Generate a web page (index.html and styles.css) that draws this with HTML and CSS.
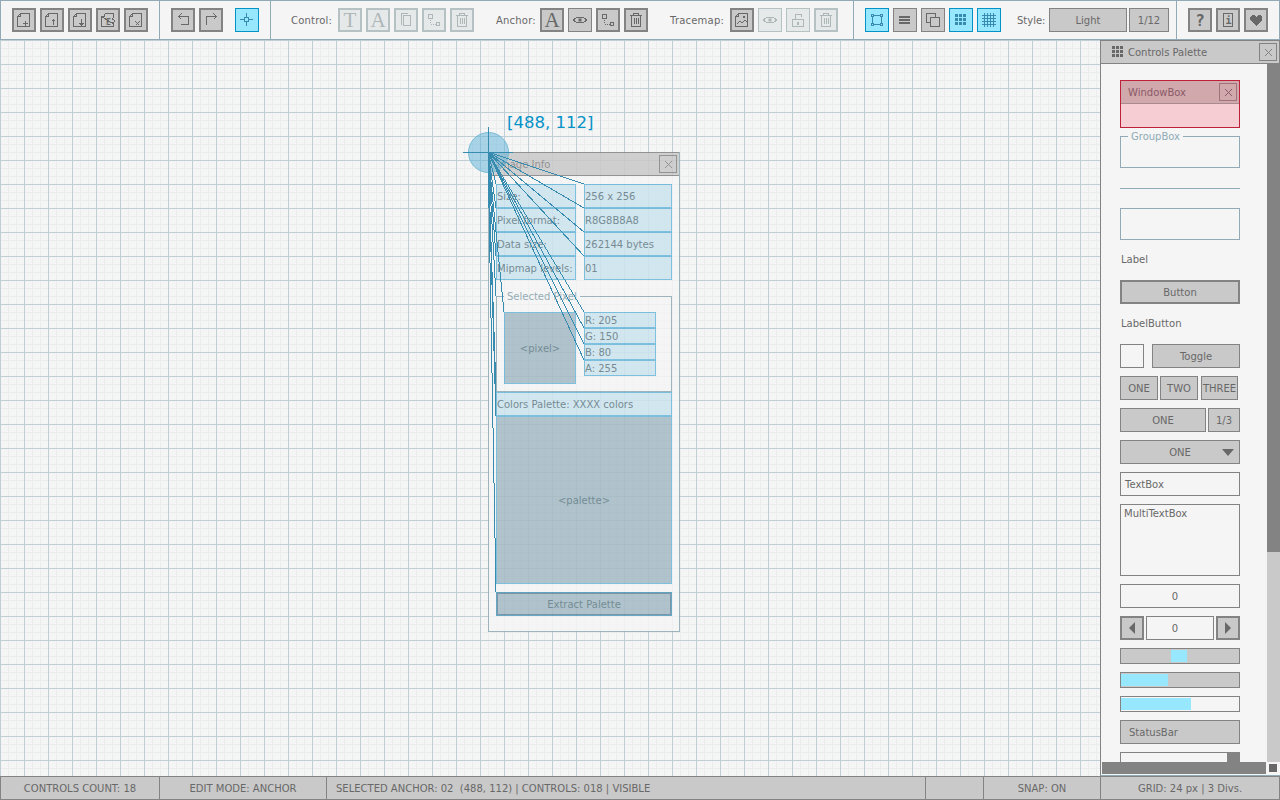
FILE: index.html
```html
<!DOCTYPE html>
<html>
    <head>
        <title>rGuiLayout</title>
        <link rel="stylesheet" href="styles.css">
    </head>
    <body>
        <svg class="icon-defs">
            <symbol id="i-file-new" viewBox="0 0 16 16"><path d="M4.5 1.5h9v13h-12v-10zM1.5 4.5h3v-3M7 11.5h5M9.5 9v5"/></symbol>
            <symbol id="i-file-open" viewBox="0 0 16 16"><path d="M4.5 1.5h9v13h-12v-10zM1.5 4.5h3v-3M9.5 13v-6M7.5 9.5l2-2 2 2"/></symbol>
            <symbol id="i-file-save" viewBox="0 0 16 16"><path d="M4.5 1.5h9v13h-12v-10zM1.5 4.5h3v-3M9.5 7v6M7.5 11l2 2 2-2"/></symbol>
            <symbol id="i-file-export" viewBox="0 0 16 16"><path d="M4.5 1.5h9v4M13.5 12v2.5h-12v-10zM1.5 4.5h3v-3M12 6.5l3 2.5-3 2.5"/><text class="icon-text" x="6" y="13" font-size="8">E</text></symbol>
            <symbol id="i-file-close" viewBox="0 0 16 16"><path d="M4.5 1.5h9v13h-12v-10zM1.5 4.5h3v-3M7.5 9.5l4 4M11.5 9.5l-4 4"/></symbol>
            <symbol id="i-undo" viewBox="0 0 16 16"><path d="M3.5 4.5h9.5v7.5h-7.5M6.5 1.5l-3 3 3 3"/></symbol>
            <symbol id="i-redo" viewBox="0 0 16 16"><path d="M3.5 13v-8.5h10M10.5 1.5l3 3-3 3"/></symbol>
            <symbol id="i-cross" viewBox="0 0 16 16"><path d="M5.5 5.5h4v4h-4zM1 7.5h4M10 7.5h4M7.5 1v4M7.5 10v4"/></symbol>
            <symbol id="i-copy" viewBox="0 0 16 16"><path d="M3.5 12.5v-11h6M5.5 3.5h7v10h-7z"/></symbol>
            <symbol id="i-link" viewBox="0 0 16 16"><path d="M2.5 2.5h4v4h-4zM10.5 10.5h3v3h-3zM4.5 8v1M4.5 10v1M4.5 12.5h1M6.5 12.5h1M8.5 12.5h1"/></symbol>
            <symbol id="i-trash" viewBox="0 0 16 16"><path d="M5.5 3v-1.5h5v1.5M2 3.5h12M3.5 4v10.5h9v-10.5M6.5 6v6M8.5 6v6M10.5 6v6"/></symbol>
            <symbol id="i-eye" viewBox="0 0 16 16"><path d="M1 8q7-6 14 0q-7 6-14 0z"/><rect class="solid" x="6.5" y="6.5" width="3" height="3"/></symbol>
            <symbol id="i-image" viewBox="0 0 16 16"><path d="M4.5 1.5h9v13h-12v-10zM1.5 4.5h3v-3M3 12l3-3 2 2 3-3 2 2"/><rect class="solid" x="9" y="4" width="2" height="2"/></symbol>
            <symbol id="i-unlock" viewBox="0 0 16 16"><path d="M2.5 7.5h11v7h-11zM5.5 7v-4.5h5.500v2M7.500 10.500h1v2h-1z"/></symbol>
            <symbol id="i-box" viewBox="0 0 16 16"><path d="M4 3.500h8M4 12.500h8M3.500 4v8M12.500 4v8M2.500 2.500h2v2h-2zM11.500 2.500h2v2h-2zM2.500 11.500h2v2h-2zM11.500 11.500h2v2h-2z"/></symbol>
            <symbol id="i-lines" viewBox="0 0 16 16"><rect class="solid" x="2" y="4" width="11" height="2"/><rect class="solid" x="2" y="7" width="11" height="2"/><rect class="solid" x="2" y="10" width="11" height="2"/></symbol>
            <symbol id="i-layers" viewBox="0 0 16 16"><path d="M5.500 10.500h-4v-9h9v4M5.500 5.500h9v9h-9z"/></symbol>
            <symbol id="i-dots" viewBox="0 0 16 16"><g class="solid"><rect x="2" y="2" width="3" height="3"/><rect x="6" y="2" width="3" height="3"/><rect x="10" y="2" width="3" height="3"/><rect x="2" y="6" width="3" height="3"/><rect x="6" y="6" width="3" height="3"/><rect x="10" y="6" width="3" height="3"/><rect x="2" y="10" width="3" height="3"/><rect x="6" y="10" width="3" height="3"/><rect x="10" y="10" width="3" height="3"/></g></symbol>
            <symbol id="i-grid" viewBox="0 0 16 16"><path d="M1 3.500h14M1 6.500h14M1 9.500h14M1 12.500h14M3.500 1v14M6.500 1v14M9.500 1v14M12.500 1v14"/></symbol>
            <symbol id="i-info" viewBox="0 0 16 16"><path d="M3.500 1.500h9v13h-9z"/><text class="icon-text" x="5.500" y="12" font-size="10">i</text></symbol>
            <symbol id="i-heart" viewBox="0 0 16 16"><path class="solid" d="M4 3h2l2 2 2-2h2l2 2v3l-6 6-6-6v-3z"/></symbol>
            <symbol id="i-close" viewBox="0 0 9 9"><path d="M1 1l7 7M8 1l-7 7"/></symbol>
        </svg>

        <div id="toolbar">
            <div class="tool-section file-tools">
                <div class="btn"><svg class="ic"><use href="#i-file-new"/></svg></div>
                <div class="btn"><svg class="ic"><use href="#i-file-open"/></svg></div>
                <div class="btn"><svg class="ic"><use href="#i-file-save"/></svg></div>
                <div class="btn"><svg class="ic"><use href="#i-file-export"/></svg></div>
                <div class="btn"><svg class="ic"><use href="#i-file-close"/></svg></div>
            </div>
            <div class="tool-section edit-tools">
                <div class="btn"><svg class="ic"><use href="#i-undo"/></svg></div>
                <div class="btn"><svg class="ic"><use href="#i-redo"/></svg></div>
                <div class="btn thin on cross-btn"><svg class="ic"><use href="#i-cross"/></svg></div>
            </div>
            <div class="tool-section item-tools">
                <div class="tool-group">
                    <span class="tool-label label-control">Control:</span>
                    <div class="btn off letter">T</div>
                    <div class="btn off letter">A</div>
                    <div class="btn off"><svg class="ic"><use href="#i-copy"/></svg></div>
                    <div class="btn off"><svg class="ic"><use href="#i-link"/></svg></div>
                    <div class="btn off"><svg class="ic"><use href="#i-trash"/></svg></div>
                </div>
                <div class="tool-group">
                    <span class="tool-label label-anchor">Anchor:</span>
                    <div class="btn letter">A</div>
                    <div class="btn thin"><svg class="ic"><use href="#i-eye"/></svg></div>
                    <div class="btn"><svg class="ic"><use href="#i-link"/></svg></div>
                    <div class="btn"><svg class="ic"><use href="#i-trash"/></svg></div>
                </div>
                <div class="tool-group">
                    <span class="tool-label label-tracemap">Tracemap:</span>
                    <div class="btn"><svg class="ic"><use href="#i-image"/></svg></div>
                    <div class="btn thin off"><svg class="ic"><use href="#i-eye"/></svg></div>
                    <div class="btn thin off"><svg class="ic"><use href="#i-unlock"/></svg></div>
                    <div class="btn off"><svg class="ic"><use href="#i-trash"/></svg></div>
                </div>
            </div>
            <div class="tool-section view-tools">
                <div class="btn thin on"><svg class="ic"><use href="#i-box"/></svg></div>
                <div class="btn thin"><svg class="ic"><use href="#i-lines"/></svg></div>
                <div class="btn thin"><svg class="ic"><use href="#i-layers"/></svg></div>
                <div class="btn thin on"><svg class="ic"><use href="#i-dots"/></svg></div>
                <div class="btn thin on"><svg class="ic"><use href="#i-grid"/></svg></div>
                <span class="tool-label label-style">Style:</span>
                <div class="btn thin wide-style">Light</div>
                <div class="btn thin wide-count">1/12</div>
            </div>
            <div class="tool-section help-tools">
                <div class="btn question">?</div>
                <div class="btn"><svg class="ic"><use href="#i-info"/></svg></div>
                <div class="btn"><svg class="ic"><use href="#i-heart"/></svg></div>
            </div>
        </div>

        <div id="main">
            <div id="canvas">
                <div class="info-window">
                    <div class="info-head">
                        <span>Image Info</span>
                        <div class="close-btn"><svg class="ic-close"><use href="#i-close"/></svg></div>
                    </div>
                    <div class="info-rows">
                        <div class="info-cell">Size:</div><div class="info-cell">256 x 256</div>
                        <div class="info-cell">Pixel format:</div><div class="info-cell">R8G8B8A8</div>
                        <div class="info-cell">Data size:</div><div class="info-cell">262144 bytes</div>
                        <div class="info-cell">Mipmap levels:</div><div class="info-cell">01</div>
                    </div>
                    <div class="info-group">
                        <span class="info-group-title">Selected Pixel</span>
                        <div class="pixel-box">&lt;pixel&gt;</div>
                        <div class="pixel-rows">
                            <div class="info-cell small">R: 205</div>
                            <div class="info-cell small">G: 150</div>
                            <div class="info-cell small">B: 80</div>
                            <div class="info-cell small">A: 255</div>
                        </div>
                    </div>
                    <div class="info-cell colors-label">Colors Palette: XXXX colors</div>
                    <div class="palette-box">&lt;palette&gt;</div>
                    <div class="extract-btn">Extract Palette</div>
                </div>

                <svg class="anchor-layer" viewBox="0 40 1100 736">
                    <circle class="anchor-circle" cx="488.500" cy="152.500" r="20"/>
                    <g class="anchor-lines">
                        <path d="M463 152.500h50M488.500 127v50"/>
                        <line x1="488" y1="152" x2="488" y2="152"/>
                        <line x1="488" y1="152" x2="584" y2="184"/>
                        <line x1="488" y1="152" x2="584" y2="208"/>
                        <line x1="488" y1="152" x2="584" y2="232"/>
                        <line x1="488" y1="152" x2="584" y2="256"/>
                        <line x1="488" y1="152" x2="496" y2="184"/>
                        <line x1="488" y1="152" x2="496" y2="208"/>
                        <line x1="488" y1="152" x2="496" y2="232"/>
                        <line x1="488" y1="152" x2="496" y2="256"/>
                        <line x1="488" y1="152" x2="496" y2="296"/>
                        <line x1="488" y1="152" x2="504" y2="312"/>
                        <line x1="488" y1="152" x2="584" y2="312"/>
                        <line x1="488" y1="152" x2="584" y2="328"/>
                        <line x1="488" y1="152" x2="584" y2="344"/>
                        <line x1="488" y1="152" x2="584" y2="360"/>
                        <line x1="488" y1="152" x2="496" y2="392"/>
                        <line x1="488" y1="152" x2="496" y2="416"/>
                        <line x1="488" y1="152" x2="496" y2="592"/>
                    </g>
                </svg>
                <span class="anchor-pos">[488, 112]</span>
            </div>

            <div id="palette">
                <div class="palette-head">
                    <svg class="ic"><use href="#i-dots"/></svg>
                    <span class="palette-title">Controls Palette</span>
                    <div class="close-btn"><svg class="ic-close"><use href="#i-close"/></svg></div>
                </div>
                <div class="palette-view">
                    <div class="palette-items">
                        <div class="demo-window">
                            <div class="demo-window-head">
                                <span>WindowBox</span>
                                <div class="close-btn"><svg class="ic-close"><use href="#i-close"/></svg></div>
                            </div>
                        </div>
                        <div class="demo-group"><span class="demo-group-title">GroupBox</span></div>
                        <div class="demo-line"></div>
                        <div class="demo-panel"></div>
                        <div class="row-24 plain-label">Label</div>
                        <div class="ctl thick">Button</div>
                        <div class="row-24 plain-label">LabelButton</div>
                        <div class="row-split">
                            <div class="ctl empty check"></div>
                            <div class="ctl grow">Toggle</div>
                        </div>
                        <div class="toggle-group">
                            <div class="ctl">ONE</div>
                            <div class="ctl">TWO</div>
                            <div class="ctl">THREE</div>
                        </div>
                        <div class="combo-row">
                            <div class="ctl grow">ONE</div>
                            <div class="ctl combo-count">1/3</div>
                        </div>
                        <div class="ctl dropdown">ONE<span class="drop-arrow"></span></div>
                        <div class="ctl empty text-left">TextBox</div>
                        <div class="ctl empty multi">MultiTextBox</div>
                        <div class="ctl empty value">0</div>
                        <div class="spinner">
                            <div class="ctl thick spin-btn"><span class="tri-left"></span></div>
                            <div class="ctl empty value grow">0</div>
                            <div class="ctl thick spin-btn"><span class="tri-right"></span></div>
                        </div>
                        <div class="bar slider"><div class="slider-thumb"></div></div>
                        <div class="bar"><div class="bar-fill fill-slider"></div></div>
                        <div class="bar bar-light"><div class="bar-fill fill-progress"></div></div>
                        <div class="ctl text-left status-demo">StatusBar</div>
                        <div class="ctl empty list-demo"><div class="list-thumb"></div></div>
                    </div>
                    <div class="vscroll"><div class="vscroll-thumb"></div></div>
                </div>
                <div class="hscroll-row">
                    <div class="hscroll-thumb"></div>
                    <div class="scroll-corner"><div class="scroll-corner-box"></div></div>
                </div>
            </div>
        </div>

        <div id="statusbar">
            <div class="status-cell cell-count">CONTROLS COUNT: 18</div>
            <div class="status-cell cell-mode">EDIT MODE: ANCHOR</div>
            <div class="status-cell cell-selected">SELECTED ANCHOR: 02  (488, 112) | CONTROLS: 018 | VISIBLE</div>
            <div class="status-cell cell-empty"></div>
            <div class="status-cell cell-snap">SNAP: ON</div>
            <div class="status-cell cell-grid">GRID: 24 px | 3 Divs.</div>
        </div>
    </body>
</html>
```

FILE: styles.css
```css
* {
    box-sizing: border-box;
}

body {
    margin: 0;
    width: 1280px;
    height: 800px;
    display: flex;
    flex-direction: column;
    overflow: hidden;
    background-color: #f5f5f5;
    color: #686868;
    font-family: "DejaVu Sans", sans-serif;
    font-size: 10px;
}

.icon-defs {
    display: none;
}

/* shared icon look, symbols are drawn on a 16px pixel grid */
symbol path,
.ic-close {
    fill: none;
    stroke: currentColor;
    stroke-width: 1;
    shape-rendering: crispEdges;
}

symbol .solid,
symbol .solid rect,
symbol rect.solid {
    fill: currentColor;
    stroke: none;
}

.icon-text {
    fill: currentColor;
    font-family: "DejaVu Sans Mono", monospace;
    font-weight: bold;
}

.ic {
    width: 16px;
    height: 16px;
    display: block;
}

.ic-close {
    width: 9px;
    height: 9px;
    display: block;
}

/* toolbar */
#toolbar {
    display: flex;
    flex: none;
    height: 40px;
    border: 1px solid #90abb5;
}

.tool-section {
    display: flex;
    align-items: center;
    gap: 4px;
    padding-left: 11px;
    border-right: 1px solid #90abb5;
}

.file-tools {
    width: 159px;
}

.edit-tools {
    width: 111px;
}

.cross-btn {
    margin-left: 8px;
}

.item-tools {
    width: 583px;
    padding-left: 20px;
    gap: 22px;
}

.tool-group {
    display: flex;
    align-items: center;
    gap: 4px;
}

.view-tools {
    width: 323px;
}

.help-tools {
    flex: 1;
    border-right: none;
}

.tool-label {
    color: #686868;
    text-align: right;
    white-space: nowrap;
}

.label-control,
.label-anchor,
.label-tracemap {
    padding-right: 2px;
    letter-spacing: 0.2px;
}

.label-control {
    width: 43px;
}

.label-anchor {
    width: 40px;
}

.label-tracemap {
    width: 56px;
}

.label-style {
    width: 28px;
    margin-left: 12px;
}

.btn {
    display: flex;
    align-items: center;
    justify-content: center;
    flex: none;
    width: 24px;
    height: 24px;
    border: 2px solid #838383;
    background-color: #c9c9c9;
    color: #686868;
}

.btn.thin {
    border-width: 1px;
}

.btn.on {
    border-color: #0492c7;
    background-color: #97e8ff;
    color: #368baf;
}

.btn.off {
    border-color: #b5c1c2;
    background-color: #e6e9e9;
    color: #aeb7b8;
}

.letter {
    font-family: "Liberation Serif", serif;
    font-size: 21px;
}

.question {
    font-family: "DejaVu Sans Mono", monospace;
    font-size: 16px;
    font-weight: bold;
}

.wide-style {
    width: 78px;
    margin-right: -2px;
}

.wide-count {
    width: 40px;
}

/* canvas */
#main {
    display: flex;
    flex: 1;
    min-height: 0;
}

#canvas {
    position: relative;
    flex: 1;
    overflow: hidden;
    background-color: #f5f5f5;
    background-image:
        linear-gradient(to right, #c0cfd6 1px, transparent 1px),
        linear-gradient(to bottom, #c0cfd6 1px, transparent 1px),
        linear-gradient(to right, #e9eded 1px, transparent 1px),
        linear-gradient(to bottom, #e9eded 1px, transparent 1px);
    background-size: 24px 24px, 24px 24px, 8px 8px, 8px 8px;
}

.info-window {
    position: absolute;
    left: 488px;
    top: 112px;
    width: 192px;
    height: 480px;
    display: flex;
    flex-direction: column;
    padding: 0 7px;
    border: 1px solid #90abb5;
    border-top: none;
    background-color: #f5f5f5;
    opacity: 0.85;
}

.info-head {
    display: flex;
    align-items: center;
    justify-content: space-between;
    height: 24px;
    margin: 0 -7px 8px;
    padding: 0 2px 0 8px;
    border: 1px solid #838383;
    border-width: 1px 0;
    background-color: #c9c9c9;
    color: #838383;
}

.close-btn {
    display: flex;
    align-items: center;
    justify-content: center;
    width: 18px;
    height: 18px;
    border: 1px solid #838383;
    color: #838383;
}

.info-rows {
    display: grid;
    grid-template-columns: 80px 88px;
    grid-auto-rows: 24px;
    column-gap: 8px;
    margin-bottom: 16px;
}

.info-cell {
    display: flex;
    align-items: center;
    border: 1px solid #6ab8db;
    background-color: #cde4ee;
    color: #5f7a85;
    white-space: nowrap;
}

.info-cell.small {
    height: 16px;
}

.info-group {
    position: relative;
    display: flex;
    gap: 8px;
    height: 96px;
    padding: 15px 7px;
    border: 1px solid #90abb5;
}

.info-group-title {
    position: absolute;
    left: 7px;
    top: -6px;
    padding: 0 3px;
    line-height: 11px;
    background-color: #f5f5f5;
    color: #84a1ac;
}

.pixel-box {
    display: flex;
    align-items: center;
    justify-content: center;
    width: 72px;
    height: 72px;
    border: 1px solid #6ab8db;
    background-color: #a4bac4;
    color: #5f7a85;
}

.pixel-rows {
    width: 72px;
}

.colors-label {
    height: 24px;
}

.palette-box {
    display: flex;
    align-items: center;
    justify-content: center;
    height: 168px;
    border: 1px solid #6ab8db;
    background-color: #a4bac4;
    color: #5f7a85;
}

.extract-btn {
    display: flex;
    align-items: center;
    justify-content: center;
    height: 24px;
    margin-top: 8px;
    border: 1px solid #4f9cbf;
    box-shadow: inset 0 0 0 1px #668594;
    background-color: #a4bac4;
    color: #5f7a85;
}

.anchor-layer {
    position: absolute;
    left: 0;
    top: 0;
    width: 1100px;
    height: 736px;
}

.anchor-circle {
    fill: rgba(91, 178, 217, 0.5);
    stroke: #78bdd6;
}

.anchor-lines {
    fill: none;
    stroke: #368baf;
    stroke-width: 1;
    shape-rendering: crispEdges;
}

.anchor-pos {
    position: absolute;
    left: 507px;
    top: 73px;
    color: #0492c7;
    font-size: 16.5px;
    line-height: 20px;
}

/* controls palette */
#palette {
    display: flex;
    flex-direction: column;
    flex: none;
    width: 180px;
    border-left: 1px solid #838383;
    border-bottom: 1px solid #90abb5;
    padding-bottom: 1px;
    background-color: #f5f5f5;
}

.palette-head {
    display: flex;
    align-items: center;
    gap: 2px;
    flex: none;
    height: 24px;
    padding: 0 2px 0 9px;
    border: 1px solid #838383;
    border-left: none;
    background-color: #c9c9c9;
}

.palette-title {
    flex: 1;
}

.palette-view {
    display: flex;
    flex: 1;
    min-height: 0;
}

.palette-items {
    display: flex;
    flex-direction: column;
    gap: 8px;
    width: 166px;
    height: 100%;
    padding: 16px 0 0 19px;
    overflow: hidden;
}

.palette-items > * {
    flex: none;
    width: 120px;
}

.demo-window {
    height: 48px;
    border: 1px solid #bf2039;
    background-color: #f5cdd2;
}

.demo-window-head {
    display: flex;
    align-items: center;
    justify-content: space-between;
    height: 23px;
    padding: 0 2px 0 7px;
    border-bottom: 1px solid #a98a8e;
    background-color: #d1a8ac;
    color: #8a5a66;
}

.demo-window-head .close-btn {
    border-color: #a0727a;
    color: #8a5a66;
}

.demo-group {
    position: relative;
    height: 32px;
    border: 1px solid #90abb5;
}

.demo-group-title {
    position: absolute;
    left: 7px;
    top: -6px;
    padding: 0 3px;
    line-height: 11px;
    background-color: #f5f5f5;
    color: #90abb5;
}

.demo-line {
    height: 24px;
    background: linear-gradient(#90abb5, #90abb5) 0 12px / 100% 1px no-repeat;
}

.demo-panel {
    height: 32px;
    border: 1px solid #90abb5;
}

.row-24 {
    height: 24px;
    line-height: 24px;
}

.plain-label {
    padding-left: 1px;
}

.ctl {
    display: flex;
    align-items: center;
    justify-content: center;
    height: 24px;
    border: 1px solid #838383;
    background-color: #c9c9c9;
    white-space: nowrap;
}

.ctl.thick {
    border-width: 2px;
}

.ctl.empty {
    background-color: #f5f5f5;
}

.row-split {
    display: flex;
    gap: 8px;
}

.check {
    width: 24px;
    flex: none;
}

.grow {
    flex: 1;
}

.toggle-group {
    display: grid;
    grid-template-columns: 38px 38px 38px;
    gap: 2px;
}

.toggle-group .ctl:last-child {
    margin-left: 1px;
}

.combo-row {
    display: flex;
    gap: 2px;
}

.combo-count {
    width: 32px;
    flex: none;
}

.dropdown {
    position: relative;
}

.drop-arrow {
    position: absolute;
    right: 5px;
    top: 8px;
    border: 6px solid transparent;
    border-top: 7px solid #686868;
    border-bottom: none;
}

.text-left {
    justify-content: flex-start;
    padding-left: 4px;
}

.multi {
    height: 72px;
    align-items: flex-start;
    justify-content: flex-start;
    padding: 3px 3px;
}

.value {
    padding-right: 10px;
}

.spinner {
    display: flex;
    gap: 2px;
}

.spin-btn {
    width: 24px;
    flex: none;
}

.tri-left {
    border: 6px solid transparent;
    border-right: 6px solid #686868;
    border-left: none;
}

.tri-right {
    border: 6px solid transparent;
    border-left: 6px solid #686868;
    border-right: none;
}

.bar {
    height: 16px;
    padding: 1px 0;
    border: 1px solid #838383;
    background-color: #c9c9c9;
}

.bar-light {
    background-color: #f5f5f5;
}

.slider {
    padding: 1px 0 1px 50px;
}

.slider-thumb {
    width: 16px;
    height: 100%;
    background-color: #97e8ff;
}

.bar-fill {
    height: 100%;
    background-color: #97e8ff;
}

.fill-slider {
    width: 47px;
}

.fill-progress {
    width: 70px;
}

.status-demo {
    padding-left: 8px;
}

.list-demo {
    align-items: flex-start;
    justify-content: flex-end;
}

.list-thumb {
    width: 12px;
    height: 22px;
    background-color: #838383;
}

.vscroll {
    flex: 1;
    background-color: #c9c9c9;
}

.vscroll-thumb {
    height: 488px;
    background-color: #838383;
}

.hscroll-row {
    display: flex;
    flex: none;
    height: 12px;
    padding-left: 1px;
}

.hscroll-thumb {
    width: 164px;
    background-color: #838383;
}

.scroll-corner {
    display: flex;
    align-items: center;
    width: 14px;
    padding-left: 3px;
}

.scroll-corner-box {
    width: 8px;
    height: 8px;
    background-color: #686868;
}

/* status bar */
#statusbar {
    display: flex;
    flex: none;
    height: 24px;
    border: 1px solid #838383;
    background-color: #c9c9c9;
}

.status-cell {
    display: flex;
    align-items: center;
    justify-content: center;
    border-right: 1px solid #838383;
    white-space: pre;
}

.cell-count {
    width: 159px;
}

.cell-mode {
    width: 167px;
}

.cell-selected {
    width: 599px;
    justify-content: flex-start;
    padding-left: 9px;
}

.cell-empty {
    width: 58px;
}

.cell-snap {
    width: 117px;
}

.cell-grid {
    flex: 1;
    border-right: none;
}
```
